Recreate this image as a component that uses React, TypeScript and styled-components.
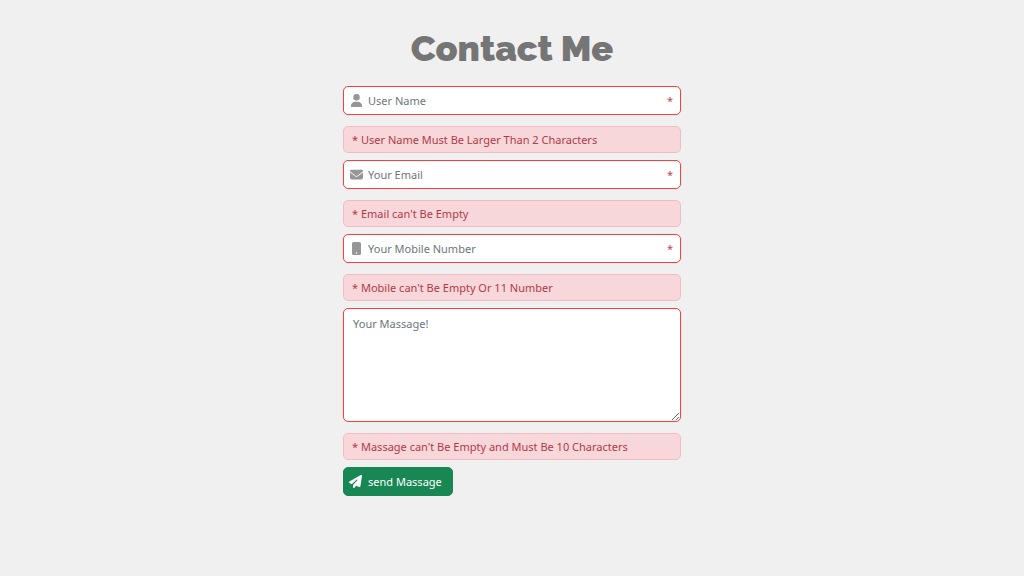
import React from "react";
import styled, { createGlobalStyle } from "styled-components";
import { FaUser, FaEnvelope, FaMobileButton, FaPaperPlane } from "react-icons/fa6";

const GlobalStyle = createGlobalStyle`
  *, *::before, *::after { box-sizing: border-box; }
  body {
    margin: 0;
    background: #f0f0f0;
    font-family: "Noto Sans", "Open Sans", sans-serif;
    font-size: 11px;
    line-height: 19px;
  }
`;

const Page = styled.main`
  display: flex;
  flex-direction: column;
  align-items: center;
  padding: 26px 0;
`;

const Title = styled.h1`
  margin: 0 0 16px;
  color: #757575;
  font-family: Raleway, Lato, sans-serif;
  font-size: 36px;
  font-weight: 900;
  line-height: 44px;
`;

const Form = styled.form`
  display: flex;
  flex-direction: column;
  align-items: flex-start;
  gap: 7px;
  width: 33%;
  min-width: 280px;
`;

const Group = styled.div`
  display: flex;
  flex-direction: column;
  gap: 11px;
  width: 100%;
`;

const Control = styled.label`
  display: flex;
  align-items: center;
  height: 29px;
  padding: 0 7px 0 6px;
  background: #fff;
  border: 1px solid #ff3b3b;
  border-radius: 5px;
`;

const IconSlot = styled.span`
  display: flex;
  width: 18px;
  color: #969696;
  font-size: 13px;
  svg { width: auto; }
`;

const Input = styled.input`
  flex: 1;
  min-width: 0;
  padding: 0;
  border: 0;
  outline: 0;
  background: transparent;
  color: #212529;
  font: inherit;
  &::placeholder { color: #6c757d; opacity: 1; }
`;

const Required = styled.span`
  color: #c0444f;
`;

const Message = styled.textarea`
  display: block;
  width: 100%;
  height: 114px;
  padding: 5px 9px;
  background: #fff;
  border: 1px solid #ff3b3b;
  border-radius: 5px;
  outline: 0;
  color: #212529;
  font: inherit;
  resize: vertical;
  &::placeholder { color: #6c757d; opacity: 1; }
`;

const Alert = styled.div`
  height: 27px;
  padding: 3px 8px;
  background: #f8d7da;
  border: 1px solid #f3bcc2;
  border-radius: 5px;
  color: #b03a48;
  white-space: nowrap;
`;

const Send = styled.button`
  display: flex;
  align-items: center;
  gap: 6px;
  height: 29px;
  padding: 0 10px 0 5px;
  background: #198754;
  border: 1px solid #198754;
  border-radius: 5px;
  color: #fff;
  font: inherit;
  cursor: pointer;
`;

const fields = [
  { id: "name", type: "text", label: "User Name", icon: <FaUser />, error: "* User Name Must Be Larger Than 2 Characters" },
  { id: "email", type: "email", label: "Your Email", icon: <FaEnvelope />, error: "* Email can't Be Empty" },
  { id: "mobile", type: "tel", label: "Your Mobile Number", icon: <FaMobileButton />, error: "* Mobile can't Be Empty Or 11 Number" },
];

export default function App() {
  return (
    <>
      <GlobalStyle />
      <Page>
        <Title>Contact Me</Title>
        <Form noValidate onSubmit={(e) => e.preventDefault()}>
          {fields.map((f) => (
            <Group key={f.id}>
              <Control htmlFor={f.id}>
                <IconSlot>{f.icon}</IconSlot>
                <Input id={f.id} type={f.type} placeholder={f.label} aria-label={f.label} aria-describedby={`${f.id}-error`} />
                <Required>*</Required>
              </Control>
              <Alert id={`${f.id}-error`}>{f.error}</Alert>
            </Group>
          ))}
          <Group>
            <Message id="message" placeholder="Your Massage!" aria-label="Your Massage!" aria-describedby="message-error" />
            <Alert id="message-error">* Massage can't Be Empty and Must Be 10 Characters</Alert>
          </Group>
          <Send type="submit">
            <FaPaperPlane size={13} />
            send Massage
          </Send>
        </Form>
      </Page>
    </>
  );
}
